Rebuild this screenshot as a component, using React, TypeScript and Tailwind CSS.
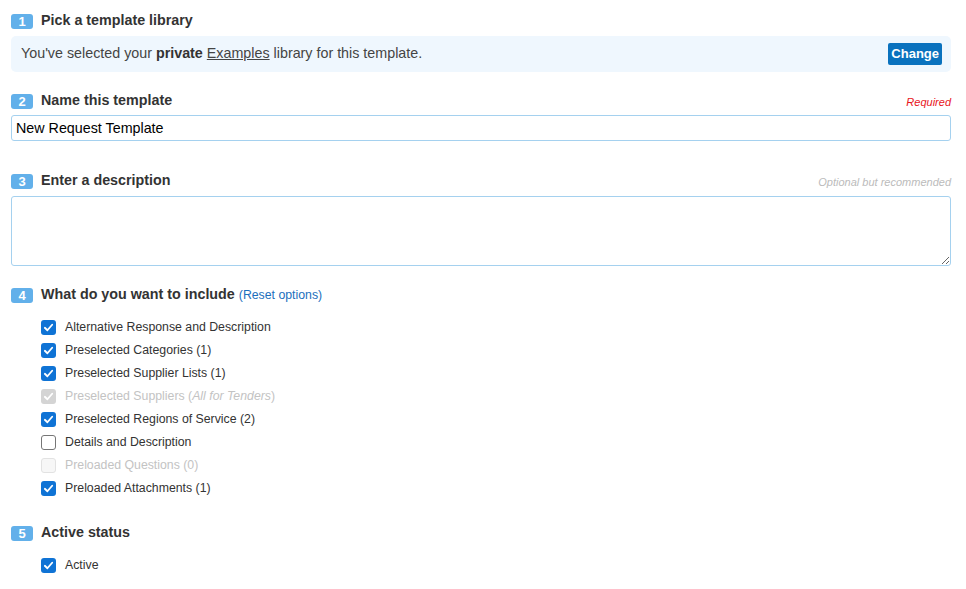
import { ReactNode } from "react";

type Option = {
  label: ReactNode;
  state: "on" | "off" | "disabledOn" | "disabledOff";
};

const options: Option[] = [
  { label: "Alternative Response and Description", state: "on" },
  { label: "Preselected Categories (1)", state: "on" },
  { label: "Preselected Supplier Lists (1)", state: "on" },
  {
    label: (
      <>
        Preselected Suppliers (<i>All for Tenders</i>)
      </>
    ),
    state: "disabledOn",
  },
  { label: "Preselected Regions of Service (2)", state: "on" },
  { label: "Details and Description", state: "off" },
  { label: "Preloaded Questions (0)", state: "disabledOff" },
  { label: "Preloaded Attachments (1)", state: "on" },
];

function StepBadge({ n }: { n: number }) {
  return (
    <span className="inline-flex h-[15px] w-[22px] items-center justify-center rounded-[3px] bg-[#62b0ea] text-[13px] font-bold leading-none text-white">
      {n}
    </span>
  );
}

function StepHeading({
  n,
  children,
  note,
}: {
  n: number;
  children: ReactNode;
  note?: ReactNode;
}) {
  return (
    <div className="flex h-[18px] items-center">
      <StepBadge n={n} />
      <h3 className="ml-2 text-[14.3px] font-bold text-[#333]">{children}</h3>
      {note && <div className="ml-auto">{note}</div>}
    </div>
  );
}

function Check({ state }: { state: Option["state"] }) {
  if (state === "off" || state === "disabledOff") {
    return (
      <span
        className={
          state === "off"
            ? "h-[15px] w-[15px] rounded-[3px] border border-[#767676] bg-white"
            : "h-[15px] w-[15px] rounded-[3px] border border-[#e2e2e2] bg-[#f7f7f7]"
        }
      />
    );
  }
  return (
    <span
      className={
        state === "on"
          ? "flex h-[15px] w-[15px] items-center justify-center rounded-[3px] bg-[#0f73d5]"
          : "flex h-[15px] w-[15px] items-center justify-center rounded-[3px] bg-[#d4d4d4]"
      }
    >
      <svg width="11" height="11" viewBox="0 0 12 12" fill="none">
        <path
          d="M2 6.3 4.8 9 10 3"
          stroke="white"
          strokeWidth="2"
          strokeLinecap="round"
          strokeLinejoin="round"
        />
      </svg>
    </span>
  );
}

function CheckRow({ label, state }: Option) {
  const muted = state === "disabledOn" || state === "disabledOff";
  return (
    <label className="flex h-[23px] items-center">
      <Check state={state} />
      <span
        className={
          muted
            ? "ml-[9px] text-[12.3px] text-[#c3c3c3]"
            : "ml-[9px] text-[12.3px] text-[#333]"
        }
      >
        {label}
      </span>
    </label>
  );
}

export default function App() {
  return (
    <div
      className="min-h-[589px] bg-white px-[11px] pt-[12px]"
      style={{ fontFamily: '"Liberation Sans", Arial, sans-serif' }}
    >
      <div className="w-[940px]">
        {/* 1 - library */}
        <StepHeading n={1}>Pick a template library</StepHeading>
        <div className="mt-[6px] flex h-[36px] items-center rounded-[5px] bg-[#eff7fe] pl-[10px] pr-[9px]">
          <p className="text-[14.3px] text-[#444]">
            You've selected your <b className="text-[#333]">private</b>{" "}
            <a href="#" className="underline">
              Examples
            </a>{" "}
            library for this template.
          </p>
          <button className="ml-auto h-[22px] rounded-[2px] bg-[#0a72be] px-[3px] text-[13px] font-bold text-white">
            Change
          </button>
        </div>

        {/* 2 - name */}
        <div className="mt-[20px]">
          <StepHeading
            n={2}
            note={<span className="text-[11px] italic text-[#e8141b]">Required</span>}
          >
            Name this template
          </StepHeading>
        </div>
        <input
          defaultValue="New Request Template"
          className="mt-[5px] block h-[26px] w-full rounded-[3px] border border-[#a5d1ef] px-[4px] text-[14.3px] text-black outline-none"
        />

        {/* 3 - description */}
        <div className="mt-[31px]">
          <StepHeading
            n={3}
            note={
              <span className="text-[11px] italic text-[#bbb]">
                Optional but recommended
              </span>
            }
          >
            Enter a description
          </StepHeading>
        </div>
        <textarea className="mt-[6px] block h-[70px] w-full rounded-[3px] border border-[#a5d1ef] px-[4px] text-[14px] outline-none" />

        {/* 4 - includes */}
        <div className="mt-[20px]">
          <StepHeading n={4}>
            What do you want to include{" "}
            <a href="#" className="text-[12.3px] font-normal text-[#1b6fbd]">
              (Reset options)
            </a>
          </StepHeading>
        </div>
        <div className="mt-[12px] pl-[30px]">
          {options.map((o, i) => (
            <CheckRow key={i} {...o} />
          ))}
        </div>

        {/* 5 - status */}
        <div className="mt-[24px]">
          <StepHeading n={5}>Active status</StepHeading>
        </div>
        <div className="mt-[12px] pl-[30px]">
          <CheckRow label="Active" state="on" />
        </div>
      </div>
    </div>
  );
}
